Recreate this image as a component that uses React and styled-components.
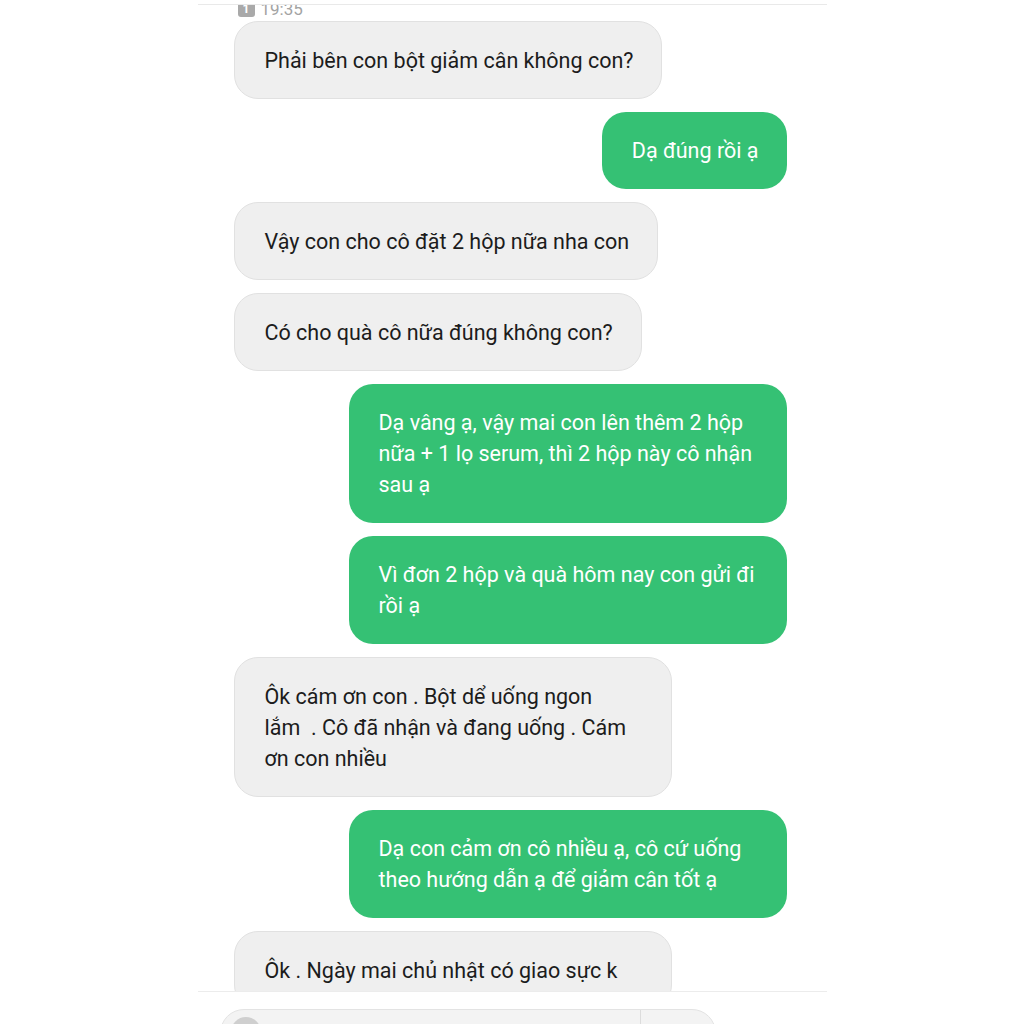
import React from 'react';
import styled, { createGlobalStyle, css } from 'styled-components';

const GlobalStyle = createGlobalStyle`
  html, body {
    margin: 0;
    padding: 0;
    background: #ffffff;
  }
  body {
    font-family: Roboto, "Noto Sans", "Liberation Sans", sans-serif;
  }
`;

export const Screen = styled.div`
  width: 1024px;
  height: 1024px;
  overflow: hidden;
  display: flex;
  justify-content: center;
  background: #fff;
`;

export const Column = styled.div`
  width: 629px;
  height: 100%;
  display: flex;
  flex-direction: column;
`;

export const TopBar = styled.div`
  height: 4px;
  flex-shrink: 0;
  border-bottom: 1px solid #e9e9e9;
`;

export const MessageList = styled.div`
  flex: 1;
  overflow: hidden;
  display: flex;
  flex-direction: column;
  gap: 13px;
  padding: 0 40px 0 36px;
`;

export const Stamp = styled.div`
  display: flex;
  align-items: center;
  gap: 6px;
  margin: -6px 0 -11px 4px;
  height: 20px;
  color: #a3a3a3;
  font-size: 17px;
  flex-shrink: 0;
`;

export const Badge = styled.span`
  width: 17px;
  height: 16px;
  border-radius: 3px;
  background: #a9a9a9;
  color: #fff;
  font-size: 12px;
  font-weight: 700;
  display: flex;
  align-items: center;
  justify-content: center;
`;

export const Bubble = styled.div`
  max-width: 438px;
  width: ${(p) => (p.$full ? '438px' : 'auto')};
  box-sizing: border-box;
  border-radius: 24px;
  font-size: 21.5px;
  line-height: 31px;
  white-space: pre;
  flex-shrink: 0;
  ${(p) =>
    p.$mine
      ? css`
          align-self: flex-end;
          padding: 23px 28px 23px 30px;
          background: #35c174;
          color: #fff;
        `
      : css`
          align-self: flex-start;
          padding: 22.5px 28px 22.5px 30px;
          background: #efefef;
          border: 1px solid #e1e1e1;
          color: #1c1c1c;
        `}
`;

export const Footer = styled.div`
  height: 33px;
  flex-shrink: 0;
  border-top: 1px solid #ececec;
  padding: 17px 0 0 22px;
  box-sizing: border-box;
`;

export const InputPill = styled.div`
  width: 496px;
  height: 48px;
  box-sizing: border-box;
  border: 1px solid #e3e3e3;
  border-radius: 26px;
  background: #f3f3f3;
  display: flex;
  align-items: flex-start;
  padding: 7px 0 0 10px;
`;

export const Avatar = styled.div`
  width: 30px;
  height: 30px;
  border-radius: 50%;
  background: #cfcfcf;
`;

export const Field = styled.div`
  flex: 1;
  border-right: 1px solid #dcdcdc;
  margin-right: 74px;
  margin-top: -7px;
  height: 48px;
`;

const messages = [
  { mine: false, lines: ['Phải bên con bột giảm cân không con?'] },
  { mine: true, lines: ['Dạ đúng rồi ạ'] },
  { mine: false, lines: ['Vậy con cho cô đặt 2 hộp nữa nha con'] },
  { mine: false, lines: ['Có cho quà cô nữa đúng không con?'] },
  { mine: true, lines: ['Dạ vâng ạ, vậy mai con lên thêm 2 hộp', 'nữa + 1 lọ serum, thì 2 hộp này cô nhận', 'sau ạ'] },
  { mine: true, lines: ['Vì đơn 2 hộp và quà hôm nay con gửi đi', 'rồi ạ'] },
  { mine: false, lines: ['Ôk cám ơn con . Bột dể uống ngon', 'lắm  . Cô đã nhận và đang uống . Cám', 'ơn con nhiều'] },
  { mine: true, lines: ['Dạ con cảm ơn cô nhiều ạ, cô cứ uống', 'theo hướng dẫn ạ để giảm cân tốt ạ'] },
  { mine: false, full: true, lines: ['Ôk . Ngày mai chủ nhật có giao sực k', ''] },
];

const App = () => {
  return (
    <>
      <GlobalStyle />
      <Screen>
        <Column>
          <TopBar />
          <MessageList>
            <Stamp>
              <Badge>1</Badge>
              19:35
            </Stamp>
            {messages.map((m, i) => (
              <Bubble key={i} $mine={m.mine} $full={m.full || m.lines.length > 1}>
                {m.lines.join('\n')}
              </Bubble>
            ))}
          </MessageList>
          <Footer>
            <InputPill>
              <Avatar />
              <Field />
            </InputPill>
          </Footer>
        </Column>
      </Screen>
    </>
  );
};

export default App;
